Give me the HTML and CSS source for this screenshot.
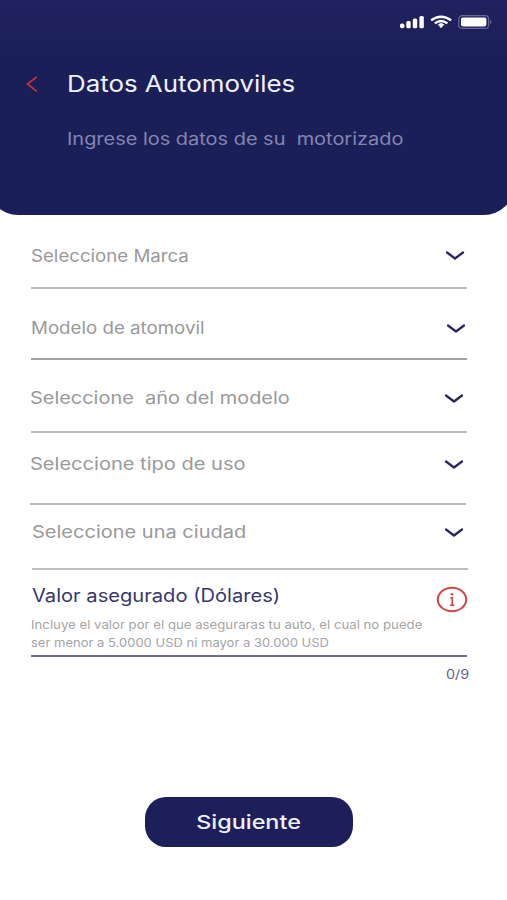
FILE: index.html
```html
<!DOCTYPE html>
<html lang="es">
<head>
<meta charset="utf-8">
<title>Datos Automoviles</title>
<link rel="stylesheet" href="styles.css">
</head>
<body>
<header class="header">
  <div class="status">
    <svg width="94" height="16" viewBox="0 0 94 16">
      <g fill="#fff">
        <rect x="0" y="9.5" width="4.4" height="4.8" rx="1.8"/>
        <rect x="6.3" y="7" width="4.4" height="7.3" rx="1.5"/>
        <rect x="12.8" y="4.5" width="4.4" height="9.8" rx="1.5"/>
        <rect x="19.4" y="2" width="4.4" height="12.3" rx="1.5"/>
        <path d="M38.5 10.5l2.5 -.9 2.8 .9 -2.8 3.2z" stroke="#fff" stroke-width="1" stroke-linejoin="round"/>
      </g>
      <g fill="none" stroke="#fff" stroke-width="2.3">
        <path d="M31.1 6.3Q41.1 -.8 51.1 6.3"/>
        <path d="M34.8 9.3Q41.1 4.6 47.4 9.3"/>
      </g>
      <rect x="58.8" y="1.6" width="29.8" height="12.8" rx="3.5" fill="none" stroke="#66689a" stroke-width="1.2"/>
      <rect x="61" y="3.6" width="25.4" height="8.8" rx="1.8" fill="#fff"/>
      <path d="M90 6v4q1.5-.6 1.5-2t-1.5-2z" fill="#66689a"/>
    </svg>
  </div>
  <div class="heading">
    <svg class="back" width="14" height="18" viewBox="0 0 14 18"><path d="M10.8 1.8L1.5 9l9.3 7.3" fill="none" stroke="#c7343c" stroke-width="1.7"/></svg>
    <div class="titles">
      <h1 class="title"><span class="wide">Datos Automoviles</span></h1>
      <p class="subtitle"><span class="wide">Ingrese los datos de su  motorizado</span></p>
    </div>
  </div>
</header>
<main class="form">
  <div class="field brand"><span class="wide">Seleccione Marca</span><svg class="chevron" width="20" height="12" viewBox="0 0 20 12"><path d="M2 2.5l8 6 8-6"/></svg></div>
  <div class="field model"><span class="wide">Modelo de atomovil</span><svg class="chevron" width="20" height="12" viewBox="0 0 20 12"><path d="M2 2.5l8 6 8-6"/></svg></div>
  <div class="field year"><span class="wide">Seleccione  año del modelo</span><svg class="chevron" width="20" height="12" viewBox="0 0 20 12"><path d="M2 2.5l8 6 8-6"/></svg></div>
  <div class="field usage"><span class="wide">Seleccione tipo de uso</span><svg class="chevron" width="20" height="12" viewBox="0 0 20 12"><path d="M2 2.5l8 6 8-6"/></svg></div>
  <div class="field city"><span class="wide">Seleccione una ciudad</span><svg class="chevron" width="20" height="12" viewBox="0 0 20 12"><path d="M2 2.5l8 6 8-6"/></svg></div>
  <section class="amount">
    <div class="amount-head">
      <h2 class="amount-title"><span class="wide">Valor asegurado (Dólares)</span></h2>
      <svg class="info" width="32" height="27" viewBox="0 0 32 27"><ellipse cx="16" cy="13.5" rx="14.2" ry="11.7" fill="none" stroke="#d34743" stroke-width="2"/><path d="M14.2 11.7h2v7.4M14 19.2h4.4" fill="none" stroke="#d34743" stroke-width="1.6"/><circle cx="16" cy="8.3" r="1.3" fill="#d34743"/></svg>
    </div>
    <p class="hint"><span class="wide line-one">Incluye el valor por el que aseguraras tu auto, el cual no puede</span><span class="wide line-two">ser menor a 5.0000 USD ni mayor a 30.000 USD</span></p>
  </section>
  <div class="counter"><span class="wide">0/9</span></div>
  <button class="next"><span class="wide">Siguiente</span></button>
</main>
</body>
</html>
```

FILE: styles.css
```css
* { box-sizing: border-box; }
body {
  margin: 0;
  height: 900px;
  overflow: hidden;
  background: #fff;
  font-family: Inter, "Liberation Sans", sans-serif;
}
h1, h2, p { margin: 0; font-weight: 400; }
svg { display: block; flex: none; }
.wide {
  display: inline-block;
  white-space: pre;
  transform: scaleX(var(--stretch, 1.15));
  transform-origin: left center;
}
.header {
  height: 214.5px;
  margin: 0 -7px 0 -12px;
  padding: 14px 20px 0 38px;
  border-radius: 0 0 30px 30px;
  background: linear-gradient(#20225f, #1b1f58 60px);
}
.status { display: flex; justify-content: flex-end; }
.heading { display: flex; gap: 27px; padding-top: 39px; }
.back { margin-top: 6px; }
.title { font-size: 22.5px; line-height: 30px; color: #eef0fc; --stretch: 1.15; }
.subtitle { margin-top: 28px; font-size: 17px; line-height: 24px; color: #8486b2; --stretch: 1.173; }
.form { padding: 0 40px 0 31px; }
.field {
  display: flex;
  justify-content: space-between;
  align-items: flex-start;
  padding-right: 2px;
  font-size: 17px;
  line-height: 24px;
  color: #999;
  border-bottom: 2px solid #bdbdbd;
}
.chevron { margin-top: 7px; fill: none; stroke: #29275f; stroke-width: 2.3; stroke-linecap: round; stroke-linejoin: round; }
.brand { height: 74.5px; padding-top: 29.5px; --stretch: 1.098; }
.brand .chevron { margin-top: 6px; }
.model { height: 71px; padding-top: 27px; padding-right: 1.5px; border-color: #a3a3a3; --stretch: 1.1; }
.year { height: 73px; padding-top: 26px; padding-right: 3px; --stretch: 1.172; }
.usage { height: 72px; padding-top: 19px; margin: 0 1px 0 -1px; --stretch: 1.18; }
.city { height: 65px; padding-top: 15px; padding-right: 4px; margin: 0 -1px 0 1px; --stretch: 1.177; }
.year .wide { margin-left: -1px; }
.amount { height: 87px; border-bottom: 2px solid #6e6c9a; }
.amount-head { display: flex; justify-content: space-between; height: 46px; padding-top: 14px; }
.amount-title { margin-left: 1px; font-size: 18px; line-height: 24px; color: #38366f; --stretch: 1.118; }
.info { margin: 2px -1px 0 0; }
.hint { display: flex; flex-direction: column; align-items: flex-start; font-size: 12px; line-height: 18px; color: #a5a5a5; }
.line-one { --stretch: 1.1; }
.line-two { --stretch: 1.084; }
.counter { display: flex; justify-content: flex-end; margin-right: -2px; padding-top: 9px; font-size: 12.5px; line-height: 18px; color: #625f92; }
.counter .wide { transform-origin: right center; }
.next {
  display: flex;
  align-items: center;
  justify-content: center;
  width: 208px;
  height: 50px;
  margin: 113px 0 0 113.5px;
  padding: 1px 0 0;
  border: 0;
  border-radius: 21px;
  background: #1d1f5a;
  color: #eef0fc;
  font: 500 19px Inter, "Liberation Sans", sans-serif;
}
.next .wide { transform-origin: center; --stretch: 1.23; }
```
